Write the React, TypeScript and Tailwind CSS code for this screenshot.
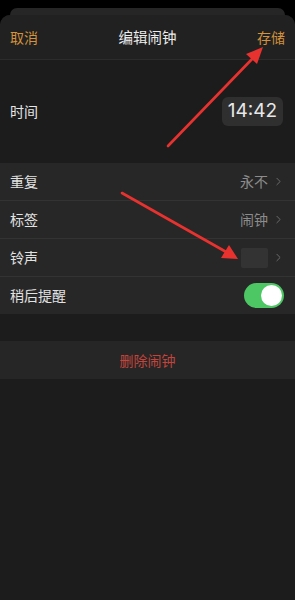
import { ChevronRight } from 'lucide-react';

const rows = [
  { label: '重复', value: '永不' },
  { label: '标签', value: '闹钟' },
  { label: '铃声', value: '' },
];

const App = () => {
  return (
    <div
      className="relative w-[295px] h-[600px] bg-black overflow-hidden"
      style={{ fontFamily: '"Noto Sans CJK SC", "Noto Sans", sans-serif' }}
    >
      <div className="h-[8px]" />
      <div className="h-[7px] mx-[10px] rounded-t-[10px] bg-[#262626]" />

      <div className="h-[585px] rounded-t-[10px] bg-[#1c1c1c] flex flex-col">
        <div className="h-[45px] flex items-center justify-between px-[10px] bg-[#212121] border-b border-[#2c2c2c] rounded-t-[10px]">
          <span className="text-[14px] text-[#d4923a]">取消</span>
          <span className="text-[14.5px] text-[#ececec]">编辑闹钟</span>
          <span className="text-[14px] text-[#d4923a]">存储</span>
        </div>

        <div className="h-[103px] flex items-center justify-between pl-[10px] pr-[12px]">
          <span className="text-[14px] text-[#e6e6e6]">时间</span>
          <div className="h-[29px] w-[61px] rounded-[6px] bg-[#2f2f2f] flex items-center justify-center text-[19px] text-[#e8e8e8] font-[Inter]">
            14:42
          </div>
        </div>

        <div className="bg-[#272727]">
          {rows.map((row) => (
            <div key={row.label} className="h-[38px] flex items-center justify-between pl-[10px] pr-[10px] border-b border-[#333333]">
              <span className="text-[14px] text-[#e2e2e2]">{row.label}</span>
              <div className="flex items-center gap-[4px]">
                {row.value ? (
                  <span className="text-[14px] text-[#8c8c8c]">{row.value}</span>
                ) : (
                  <div className="w-[27px] h-[20px] bg-[#333333] rounded-[2px]" />
                )}
                <ChevronRight className="w-[13px] h-[13px] text-[#6c6c6c]" strokeWidth={1.8} />
              </div>
            </div>
          ))}
          <div className="h-[37px] flex items-center justify-between pl-[10px] pr-[11px]">
            <span className="text-[14px] text-[#e2e2e2]">稍后提醒</span>
            <div className="w-[40px] h-[25px] rounded-full bg-[#4cc764] flex items-center justify-end p-[2px]">
              <div className="w-[21px] h-[21px] rounded-full bg-white" />
            </div>
          </div>
        </div>

        <div className="h-[27px]" />

        <div className="h-[38px] bg-[#262626] flex items-center justify-center">
          <span className="text-[14px] text-[#c2443c]">删除闹钟</span>
        </div>
      </div>

      <svg className="absolute inset-0 pointer-events-none" width="295" height="600" viewBox="0 0 295 600">
        <line x1="168" y1="146" x2="254" y2="57" stroke="#e8322f" strokeWidth="2.6" strokeLinecap="round" />
        <polygon points="263,47 246,54 257,64" fill="#e8322f" />
        <line x1="122" y1="193" x2="228" y2="253" stroke="#e8322f" strokeWidth="2.6" strokeLinecap="round" />
        <polygon points="238,259 221,258 229,245" fill="#e8322f" />
      </svg>
    </div>
  );
};

export default App;
